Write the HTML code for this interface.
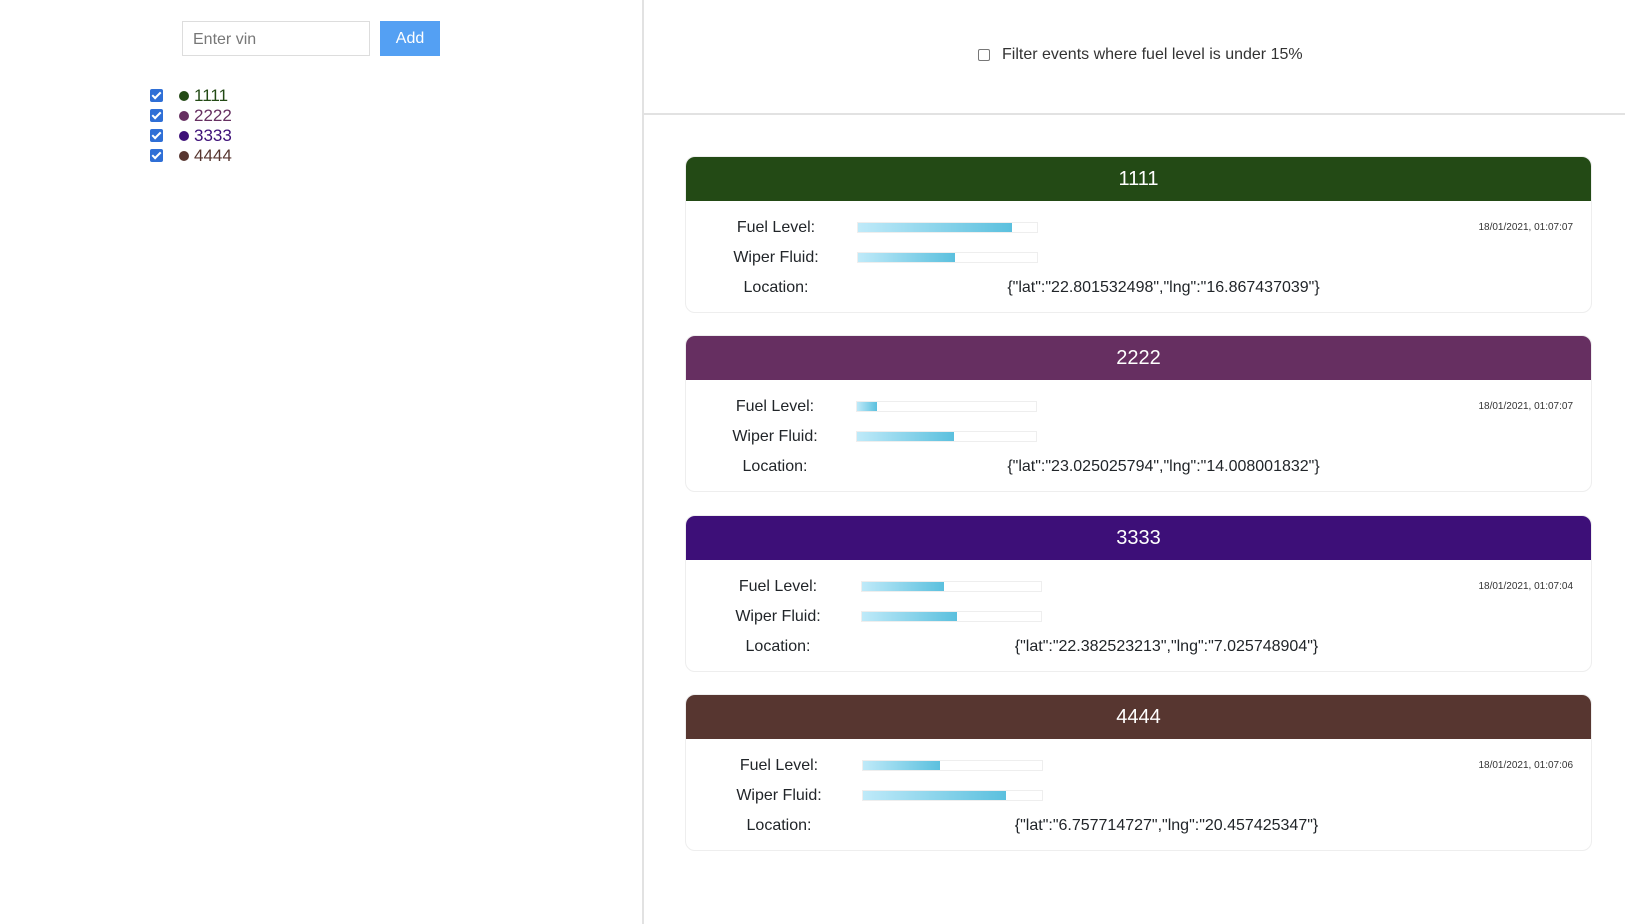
<!DOCTYPE html>
<html><head><meta charset="utf-8"><style>
*{box-sizing:border-box;margin:0;padding:0}
body{width:1625px;height:924px;overflow:hidden;background:#fff;font-family:"Liberation Sans",sans-serif;color:#212529;position:relative}
.div{position:absolute;left:642px;top:0;width:2px;height:924px;background:#e2e2e2}
.hl{position:absolute;left:644px;top:113px;width:981px;height:2px;background:#e2e2e2}
.inp{position:absolute;left:182px;top:21px;width:188px;height:35px;border:1px solid #ddd;font-size:16px;color:#777;padding:9px 10px}
.btn{position:absolute;left:380px;top:21px;width:60px;height:35px;background:#54a0f3;color:#fff;font-size:16px;text-align:center;line-height:36px}
.li{position:absolute;left:150px;font-size:17px;height:20px;line-height:20px}
.cb{position:absolute;left:0;top:3px;width:13px;height:13px;background:#2f6fd6;border-radius:2px}
.cb:after{content:"";position:absolute;left:4px;top:1px;width:3px;height:7px;border:solid #fff;border-width:0 2px 2px 0;transform:rotate(45deg)}
.dot{position:absolute;left:29px;top:5px;width:10px;height:10px;border-radius:50%}
.li span{position:absolute;left:44px}
.filt{position:absolute;left:978px;top:46px;font-size:16px;color:#333}
.filt i{position:absolute;left:0;top:3px;width:12px;height:12px;border:1px solid #777;border-radius:2px}
.filt span{position:absolute;left:24px;white-space:nowrap}
.card{position:absolute;left:685px;width:907px;height:157px;border:1px solid #eee;border-radius:10px;overflow:hidden}
.hd{height:44px;color:#fff;font-size:20px;text-align:center;line-height:44px}
.lab{position:absolute;font-size:16px;text-align:center;width:140px;white-space:nowrap}
.bar{position:absolute;width:181px;height:11px;border:1px solid #eee;background:#fff}
.bar b{display:block;height:100%;background:linear-gradient(90deg,#bfeaf9,#5bc0de)}
.ts{position:absolute;right:18px;top:65px;font-size:10px;color:#333}
.loc{position:absolute;font-size:16px;left:0;width:907px;text-align:center;padding-left:48px}
</style></head><body>
<div class="div"></div><div class="hl"></div>
<div class="inp">Enter vin</div><div class="btn">Add</div>
<div class="li" style="top:86px"><div class="cb"></div><div class="dot" style="background:#234a15"></div><span style="color:#234a15">1111</span></div>
<div class="li" style="top:106px"><div class="cb"></div><div class="dot" style="background:#662f61"></div><span style="color:#662f61">2222</span></div>
<div class="li" style="top:126px"><div class="cb"></div><div class="dot" style="background:#3d0f78"></div><span style="color:#3d0f78">3333</span></div>
<div class="li" style="top:146px"><div class="cb"></div><div class="dot" style="background:#573630"></div><span style="color:#573630">4444</span></div>
<div class="filt"><i></i><span>Filter events where fuel level is under 15%</span></div>

<div class="card" style="top:156px"><div class="hd" style="background:#234a15">1111</div>
<div class="lab" style="left:20px;top:62px">Fuel Level:</div><div class="bar" style="left:171px;top:65px"><b style="width:86%"></b></div>
<div class="lab" style="left:20px;top:92px">Wiper Fluid:</div><div class="bar" style="left:171px;top:95px"><b style="width:54%"></b></div>
<div class="lab" style="left:20px;top:122px">Location:</div><div class="loc" style="top:122px">{"lat":"22.801532498","lng":"16.867437039"}</div>
<div class="ts">18/01/2021, 01:07:07</div></div>

<div class="card" style="top:335px"><div class="hd" style="background:#662f61">2222</div>
<div class="lab" style="left:19px;top:62px">Fuel Level:</div><div class="bar" style="left:170px;top:65px"><b style="width:11%"></b></div>
<div class="lab" style="left:19px;top:92px">Wiper Fluid:</div><div class="bar" style="left:170px;top:95px"><b style="width:54%"></b></div>
<div class="lab" style="left:19px;top:122px">Location:</div><div class="loc" style="top:122px">{"lat":"23.025025794","lng":"14.008001832"}</div>
<div class="ts">18/01/2021, 01:07:07</div></div>

<div class="card" style="top:515px"><div class="hd" style="background:#3d0f78">3333</div>
<div class="lab" style="left:22px;top:62px">Fuel Level:</div><div class="bar" style="left:175px;top:65px"><b style="width:46%"></b></div>
<div class="lab" style="left:22px;top:92px">Wiper Fluid:</div><div class="bar" style="left:175px;top:95px"><b style="width:53%"></b></div>
<div class="lab" style="left:22px;top:122px">Location:</div><div class="loc" style="top:122px;padding-left:54px">{"lat":"22.382523213","lng":"7.025748904"}</div>
<div class="ts">18/01/2021, 01:07:04</div></div>

<div class="card" style="top:694px"><div class="hd" style="background:#573630">4444</div>
<div class="lab" style="left:23px;top:62px">Fuel Level:</div><div class="bar" style="left:176px;top:65px"><b style="width:43%"></b></div>
<div class="lab" style="left:23px;top:92px">Wiper Fluid:</div><div class="bar" style="left:176px;top:95px"><b style="width:80%"></b></div>
<div class="lab" style="left:23px;top:122px">Location:</div><div class="loc" style="top:122px;padding-left:54px">{"lat":"6.757714727","lng":"20.457425347"}</div>
<div class="ts">18/01/2021, 01:07:06</div></div>
</body></html>
